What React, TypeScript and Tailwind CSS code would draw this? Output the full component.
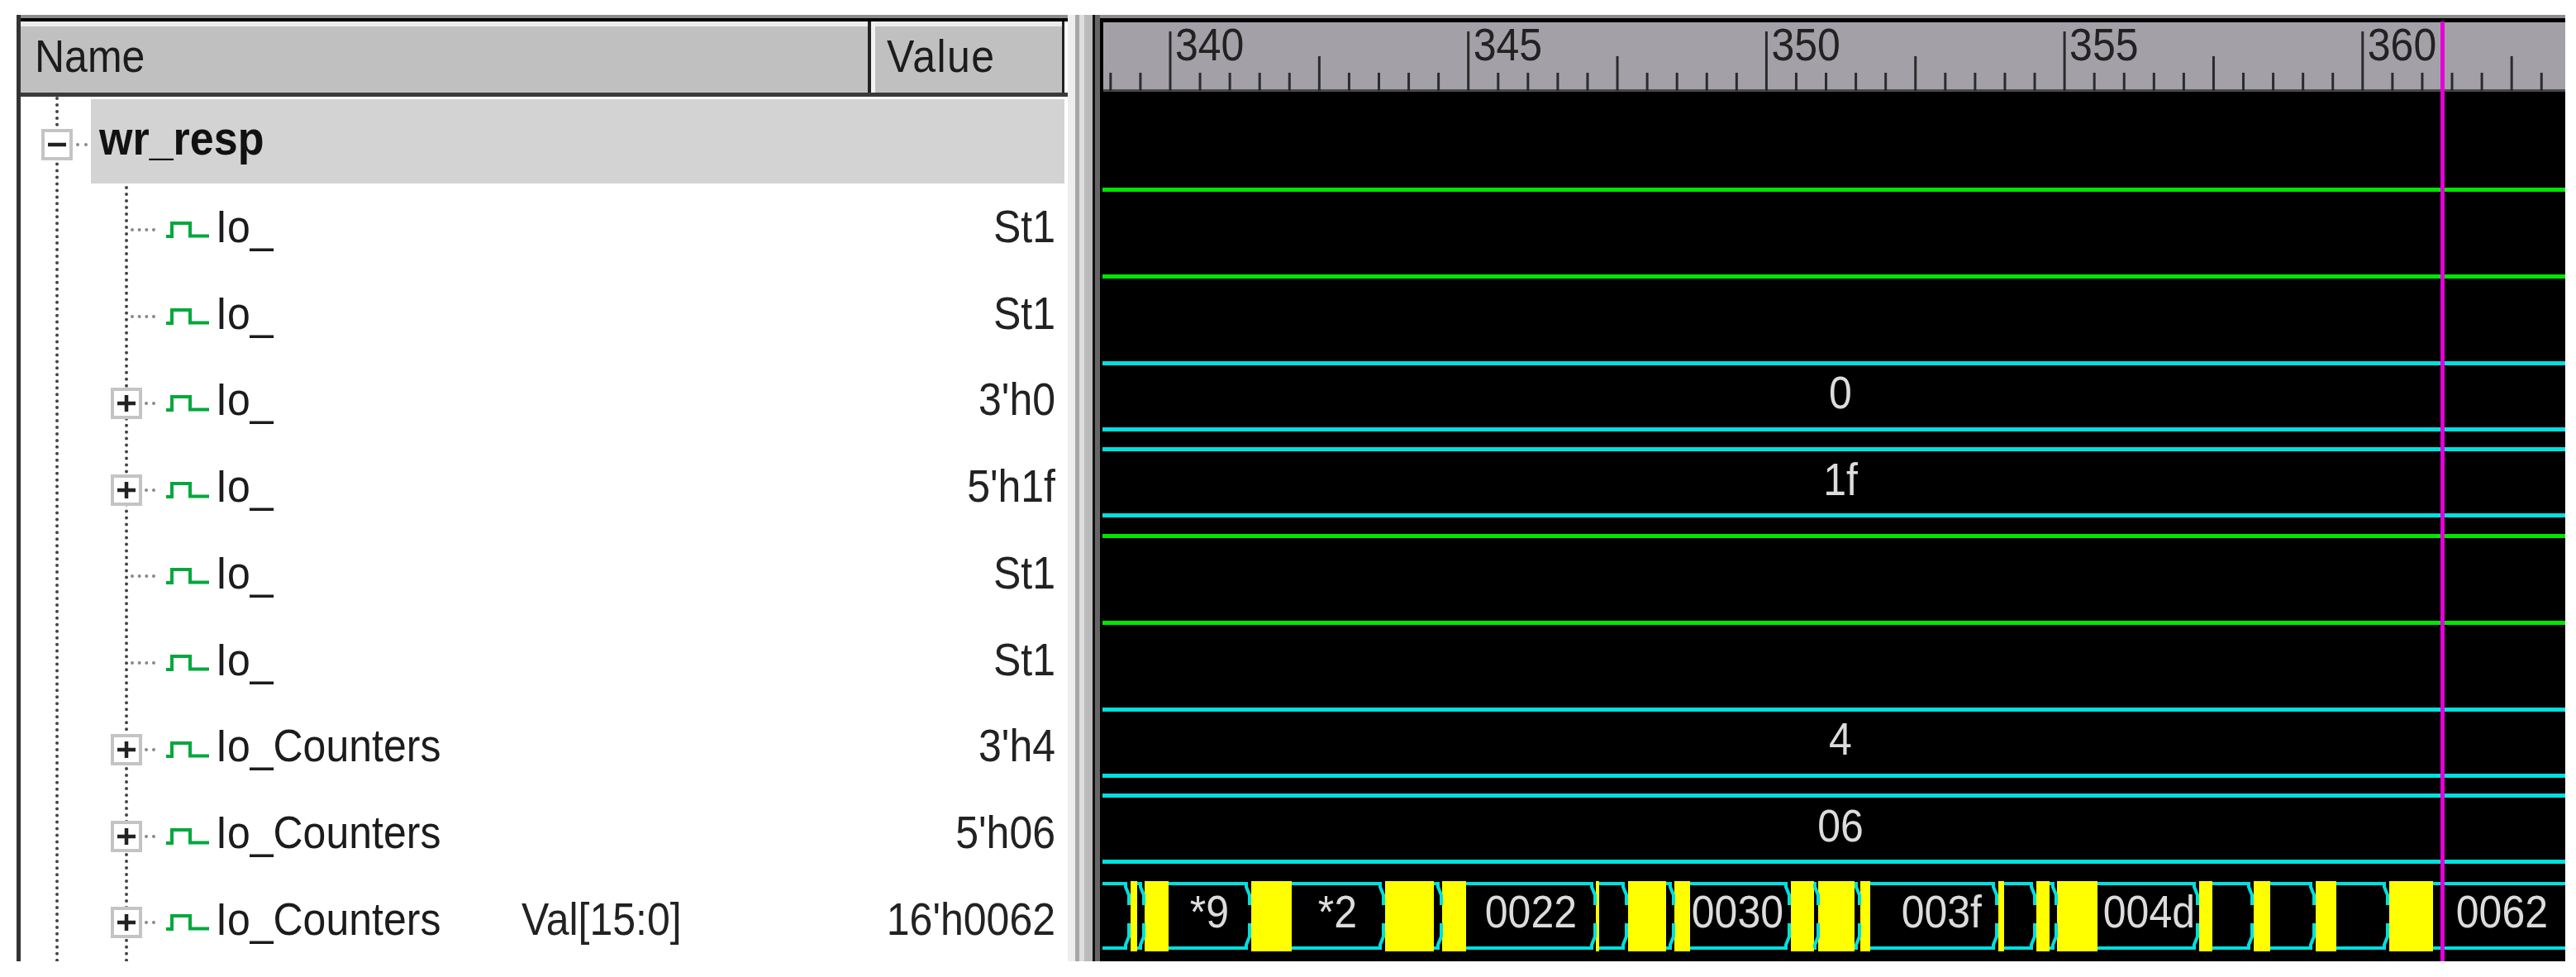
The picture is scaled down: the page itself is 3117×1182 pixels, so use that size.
const signals = [
  { name: "Io_", value: "St1", bus: false },
  { name: "Io_", value: "St1", bus: false },
  { name: "Io_", value: "3'h0", bus: true, wave: "0" },
  { name: "Io_", value: "5'h1f", bus: true, wave: "1f" },
  { name: "Io_", value: "St1", bus: false },
  { name: "Io_", value: "St1", bus: false },
  { name: "Io_Counters", value: "3'h4", bus: true, wave: "4" },
  { name: "Io_Counters", value: "5'h06", bus: true, wave: "06" },
  { name: "Io_Counters", label: "Val[15:0]", value: "16'h0062", bus: true },
];

const ticks = Array.from({ length: 49 }, (_, i) => i - 2);

// yellow = unknown stretches of the bus, x in page pixels
const yellow = [
  [1368, 1376], [1385, 1414], [1514, 1563], [1676, 1735], [1745, 1774], [1931, 1935],
  [1970, 2016], [2026, 2045], [2167, 2195], [2200, 2244], [2251, 2263], [2418, 2425], [2464, 2480],
  [2489, 2538], [2661, 2677], [2727, 2747], [2802, 2827], [2891, 2944],
];

const segments = [
  [1334, 1367], [1376, 1385], [1414, 1513], [1563, 1675], [1735, 1745], [1774, 1931],
  [1935, 1969], [2016, 2026], [2045, 2166], [2195, 2201], [2244, 2251], [2263, 2417], [2425, 2463], [2480, 2489],
  [2538, 2660], [2677, 2726], [2747, 2801], [2827, 2890],
];

const busText = [
  ["*9", 1487], ["*2", 1642], ["0022", 1908], ["0030", 2158], ["003f", 2398], ["004d", 2656], ["0062", 3083],
] as const;

function Tall({ children }: { children: React.ReactNode }) {
  return <span className="inline-block scale-y-[1.1]">{children}</span>;
}

function Toggle({ open }: { open?: boolean }) {
  return (
    <svg width="38" height="38" viewBox="0 0 38 38" className="shrink-0 bg-white">
      <rect x="2" y="2" width="34" height="34" fill="white" stroke="#c4c4c4" strokeWidth="4" />
      <path d={open ? "M8 19h22" : "M8 19h22M19 9v20"} stroke="#222" strokeWidth="4.5" fill="none" />
    </svg>
  );
}

function Pulse() {
  return (
    <svg width="52" height="22" viewBox="0 0 52 22" className="shrink-0">
      <path d="M0 19H7V3H29V18.5H52" stroke="#00a83c" strokeWidth="4" fill="none" />
    </svg>
  );
}

function SignalRow({ name, value, label, bus }: { name: string; value: string; label?: string; bus: boolean }) {
  return (
    <div className="relative flex h-[104.75px] items-center pt-[8px] pr-[15px]">
      <div className="flex w-[606px] items-center">
        {bus ? (
          <>
            <div className="ml-[109px]">
              <Toggle />
            </div>
            <div className="ml-[3px] w-[13px] border-t-[4px] border-dotted border-[#888]" />
          </>
        ) : (
          <div className="ml-[133px] w-[30px] border-t-[4px] border-dotted border-[#888]" />
        )}
        <div className="ml-[13px]">
          <Pulse />
        </div>
        <span className="ml-[8px] pb-[9px] text-[#1c1c1c]">
          <Tall>{name}</Tall>
        </span>
      </div>
      <span className="pb-[9px] text-[#222]">{label && <Tall>{label}</Tall>}</span>
      <span className="ml-auto pb-[9px] text-[#222]">
        <Tall>{value}</Tall>
      </span>
    </div>
  );
}

function NamePane() {
  return (
    <div className="flex h-full w-[1272px] flex-col border-l-[5px] border-[#333] overflow-hidden">
      <div className="border-t-[4px] border-[#8c8c8c]">
        <div className="border-t-[4px] border-black" />
        <div className="flex h-[91px] border-b-[5px] border-[#3a3a3a] pr-[4px]">
          <div className="flex flex-1 items-center border-t-[6px] border-[#ececec] bg-[#c0c0c0] pl-[17px] pb-[8px] text-[#1c1c1c]">
            <Tall>Name</Tall>
          </div>
          <div className="w-[4px] bg-[#222]" />
          <div className="flex w-[234px] border-l-[5px] border-[#f2f2f2]">
            <div className="flex flex-1 items-center border-t-[6px] border-[#ececec] bg-[#c0c0c0] pl-[14px] pb-[8px] tracking-[1.5px] text-[#1c1c1c]">
              <Tall>Value</Tall>
            </div>
            <div className="w-[3px] bg-[#222]" />
          </div>
        </div>
      </div>

      <div className="relative flex-1">
        <div className="absolute top-0 bottom-0 left-[42px] border-l-[4px] border-dotted border-[#444]" />
        <div className="absolute top-[108px] bottom-0 left-[126px] border-l-[4px] border-dotted border-[#444]" />

        <div className="relative flex h-[105px] pt-[3px] pr-[4px]">
          <div className="flex w-[85px] items-center pt-[8px]">
            <div className="ml-[25px]">
              <Toggle open />
            </div>
            <div className="ml-[4px] w-[14px] border-t-[4px] border-dotted border-[#888]" />
          </div>
          <div className="flex flex-1 items-center bg-[#d3d3d3] pl-[10px] pb-[8px] text-[52px] font-bold text-[#111]">
            <Tall>wr_resp</Tall>
          </div>
        </div>

        {signals.map((s, i) => (
          <SignalRow key={i} name={s.name} value={s.value} label={s.label} bus={s.bus} />
        ))}
      </div>
    </div>
  );
}

function Ruler() {
  return (
    <svg width="1769" height="84" viewBox="1335 27 1769 84" className="block overflow-visible bg-[#a3a1a7]">
      <rect x="1335" y="108" width="1769" height="3" fill="#4a4a4a" />
      {ticks.map((t) => {
        const x = 1416 + t * 36.07;
        const top = t % 10 === 0 ? 38 : t % 5 === 0 ? 68 : 88;
        return <rect key={t} x={x - 1.5} y={top} width="3" height={110 - top} fill="#2b2b2b" />;
      })}
      {[340, 345, 350, 355, 360].map((n, i) => (
        <text key={n} transform={`translate(${1422 + i * 360.7} 73) scale(1 1.1)`} fontSize="50" fill="#222">
          {n}
        </text>
      ))}
    </svg>
  );
}

function BusWave() {
  const top = 1069;
  const bottom = 1147;
  return (
    <svg width="1773" height="96" viewBox="1331 1060 1773 96" className="block">
      {busText.map(([t, x]) => (
        <text key={t} transform={`translate(${x} 1122) scale(1 1.1)`} fontSize="50" fill="#dcdcdc" textAnchor="end">
          {t}
        </text>
      ))}
      {yellow.map(([a, b]) => (
        <rect key={a} x={a} y="1066" width={b - a} height="85" fill="#ffff00" />
      ))}
      <g stroke="#00e0e0" strokeWidth="4" fill="none">
        {segments.map(([a, b]) => (
          <path
            key={a}
            d={`M${a} ${top}H${b - 5}V${top + 4}L${b - 1} ${top + 14}V${top + 26}M${b - 1} ${bottom - 30}V${bottom - 14}L${b - 5} ${bottom - 4}V${bottom}H${a}`}
          />
        ))}
        <path d={`M2944 ${top}H3104M2944 ${bottom}H3104`} />
      </g>
    </svg>
  );
}

function WavePane() {
  return (
    <div className="relative h-full w-[1773px] overflow-hidden bg-black">
      <div className="h-[4px] bg-[#8c8c8c]" />
      <div className="h-[5px] bg-black" />
      <div className="pl-[4px]">
        <Ruler />
      </div>
      <div className="h-[111px]" />
      {signals.map((s, i) =>
        s.bus && !s.wave ? (
          <div key={i} className="h-[104.75px]">
            <BusWave />
          </div>
        ) : (
          <div key={i} className="h-[104.75px] pt-[5px] pl-[3px]">
            {!s.bus && <div className="h-[5px] bg-[#00e600]" />}
            {s.bus && (
              <div className="flex h-[85px] items-center justify-center border-y-[5px] border-[#00e0e0] pl-[16px] pb-[8px] text-[#dcdcdc]">
                <Tall>{s.wave}</Tall>
              </div>
            )}
          </div>
        ),
      )}
      <div className="absolute top-[8px] bottom-0 left-[1622px] w-[5px] bg-[#e400d8]" />
    </div>
  );
}

export default function App() {
  return (
    <div className="h-[1182px] w-[3117px] overflow-hidden bg-white pt-[18px] pl-[20px] font-['Liberation_Sans',Arial,sans-serif] text-[50px] leading-[50px]">
      <div className="flex h-[1145px]">
        <NamePane />
        <div className="flex w-[39px] bg-white">
          <div className="w-[9px] bg-[#eeeeee]" />
          <div className="w-[5px] bg-[#a8a8a8]" />
          <div className="w-[6px] bg-[#dddddd]" />
          <div className="w-[10px] bg-[#bbbbbb]" />
          <div className="w-[3px] bg-[#111]" />
          <div className="w-[6px] bg-[#666]" />
        </div>
        <WavePane />
      </div>
    </div>
  );
}
